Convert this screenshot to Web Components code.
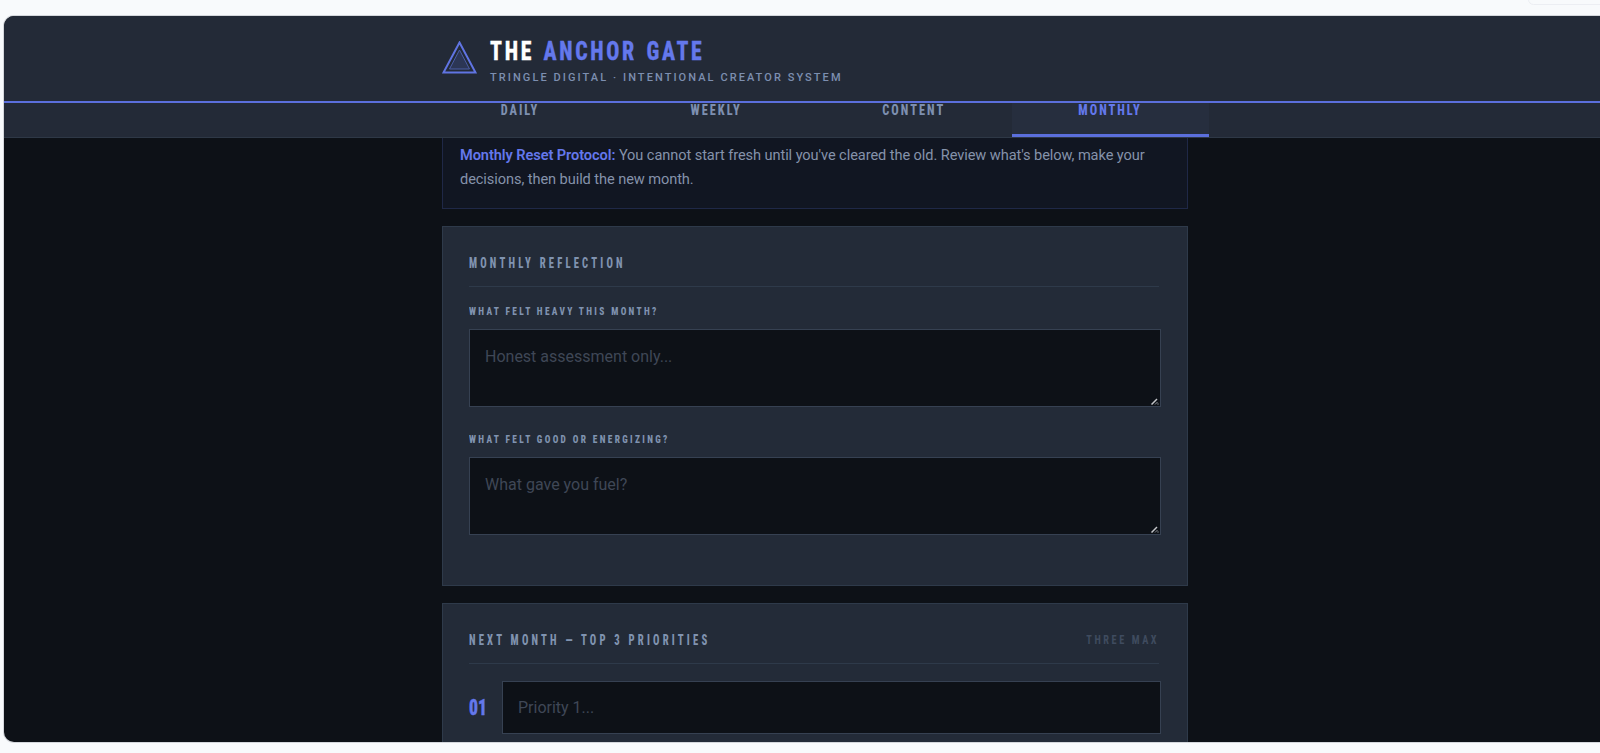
<!DOCTYPE html>
<html lang="en">
<head>
<meta charset="utf-8">
<title>The Anchor Gate</title>
<style>
html, body { margin: 0; height: 100%; overflow: hidden; background: #f8fafc; }
body { font-family: "Roboto", "Liberation Sans", sans-serif; }
</style>
</head>
<body>
<ag-app>
  <ag-header slot="header"></ag-header>
  <ag-nav slot="nav">
    <ag-tab>DAILY</ag-tab>
    <ag-tab>WEEKLY</ag-tab>
    <ag-tab>CONTENT</ag-tab>
    <ag-tab active>MONTHLY</ag-tab>
  </ag-nav>
  <ag-notice><b>Monthly Reset Protocol:</b> You cannot start fresh until you've cleared the old. Review what's below, make your decisions, then build the new month.</ag-notice>
  <ag-panel heading="MONTHLY REFLECTION">
    <ag-field label="WHAT FELT HEAVY THIS MONTH?" placeholder="Honest assessment only..."></ag-field>
    <ag-field label="WHAT FELT GOOD OR ENERGIZING?" placeholder="What gave you fuel?"></ag-field>
  </ag-panel>
  <ag-panel heading="NEXT MONTH — TOP 3 PRIORITIES" note="THREE MAX">
    <ag-priority num="01" placeholder="Priority 1..."></ag-priority>
  </ag-panel>
</ag-app>
<script>
// Roboto Condensed is wider than the reference's display face, so headings get squeezed with scaleX
const NARROW = `"Roboto Condensed", "Liberation Sans Narrow", "Liberation Sans", sans-serif`;
const TEXT = `"Roboto", "Liberation Sans", sans-serif`;

class AgApp extends HTMLElement {
  constructor() {
    super();
    this.attachShadow({mode: 'open'}).innerHTML = `
<style>
:host { display: block; height: 753px; box-sizing: border-box; padding: 16px 0 11px 4px; overflow: hidden; position: relative; }
.frame {
  width: 1622px; height: 726px; background: #0d1117; overflow: hidden;
  border-radius: 10px 0 0 10px; display: flex; flex-direction: column;
  box-shadow: 0 0 0 1px #d4d7dc;
}
main { flex: 1; display: flex; flex-direction: column; align-items: center; gap: 17px; overflow: hidden; }
.tab-edge {
  position: absolute; top: -6px; right: -10px; width: 80px; height: 9px;
  border: 1px solid #eceef3; border-radius: 8px; background: #f8fafc;
}
</style>
<div class="tab-edge"></div>
<div class="frame">
  <slot name="header"></slot>
  <slot name="nav"></slot>
  <main><slot></slot></main>
</div>`;
  }
}

class AgHeader extends HTMLElement {
  constructor() {
    super();
    this.attachShadow({mode: 'open'}).innerHTML = `
<style>
:host { display: block; background: #232a37; border-bottom: 2px solid #5b6fdc; height: 85px; box-sizing: content-box; }
.inner { width: 746px; margin: 0 auto; display: flex; gap: 13px; padding-top: 25px; }
svg { flex: none; }
h1 { margin: -2px 0 0; font: 800 26px/24px ${NARROW}; letter-spacing: 3.2px; word-spacing: 2px; color: #fff; white-space: nowrap;
  -webkit-text-stroke: .3px currentColor; transform: scaleX(.838); transform-origin: left; }
h1 span { color: #6478ec; }
p { margin: 8px 0 0; font: 500 11px/14px ${TEXT}; letter-spacing: 2.07px; color: #7d8fb0; white-space: nowrap; }
</style>
<div class="inner">
  <svg width="35" height="33" viewBox="0 0 35 33">
    <path d="M17.5 1.5 33.5 31.5H1.5Z" fill="none" stroke="#6074e2" stroke-width="2"/>
    <path d="M17.5 9 27.5 28H7.5Z" fill="#2c3655" stroke="#4c5ea8" stroke-width="1"/>
  </svg>
  <div>
    <h1>THE <span>ANCHOR GATE</span></h1>
    <p>TRINGLE DIGITAL · INTENTIONAL CREATOR SYSTEM</p>
  </div>
</div>`;
  }
}

class AgNav extends HTMLElement {
  constructor() {
    super();
    this.attachShadow({mode: 'open'}).innerHTML = `
<style>
:host { display: block; background: #232a37; border-bottom: 1px solid #2e3846; height: 34px; }
nav { width: 788px; margin: 0 auto; display: grid; grid-template-columns: repeat(4, 1fr); height: 34px; }
</style>
<nav><slot></slot></nav>`;
  }
}

class AgTab extends HTMLElement {
  constructor() {
    super();
    this.attachShadow({mode: 'open'}).innerHTML = `
<style>
:host { display: block; box-sizing: border-box; height: 34px; text-align: center; border-bottom: 3px solid transparent;
  font: 800 14px/15px ${NARROW}; letter-spacing: 2.3px; color: #7d8fb0; }
:host([active]) { background: #262e3e; border-bottom-color: #5b6fdc; color: #6478ec; }
span { display: inline-block; transform: scaleX(.88); }
</style>
<span><slot></slot></span>`;
  }
}

class AgNotice extends HTMLElement {
  constructor() {
    super();
    this.attachShadow({mode: 'open'}).innerHTML = `
<style>
:host { display: block; flex: none; box-sizing: border-box; width: 746px; height: 71px; padding: 5px 17px 0;
  background: #111622; border: 1px solid #1f2847; border-top: 0;
  font: 400 14.6px/24px ${TEXT}; letter-spacing: -.08px; color: #8592aa; }
::slotted(b) { color: #6478ec; font-weight: 600; }
</style>
<slot></slot>`;
  }
}

class AgPanel extends HTMLElement {
  constructor() {
    super();
    const note = this.getAttribute('note');
    this.attachShadow({mode: 'open'}).innerHTML = `
<style>
:host { display: block; flex: none; box-sizing: border-box; width: 746px; padding: 26px 26px 50px;
  background: #232b38; border: 1px solid #2e3a4a; }
header { display: flex; justify-content: space-between; align-items: center; height: 20px; padding-bottom: 13px; margin: 0 2px 18px 0;
  border-bottom: 1px solid #2e3a4a; }
h2 { margin: 0; font: 800 14px/20px ${NARROW}; letter-spacing: 4.2px; color: #8093b0; white-space: nowrap;
  transform: scaleX(.76); transform-origin: left; }
span { font: 700 12px/20px ${NARROW}; letter-spacing: 3px; color: #3f4b5f; white-space: nowrap;
  transform: scaleX(.855); transform-origin: right; }
.body { display: flex; flex-direction: column; gap: 26px; }
</style>
<header><h2>${this.getAttribute('heading')}</h2>${note ? `<span>${note}</span>` : ''}</header>
<div class="body"><slot></slot></div>`;
  }
}

class AgField extends HTMLElement {
  constructor() {
    super();
    this.attachShadow({mode: 'open'}).innerHTML = `
<style>
:host { display: block; position: relative; }
label { display: block; font: 800 11px/14px ${NARROW}; letter-spacing: 2.75px; color: #8093b0; margin-bottom: 10px; white-space: nowrap;
  transform: scaleX(.85); transform-origin: left; }
textarea { display: block; box-sizing: border-box; width: 100%; height: 78px; padding: 15px 15px 7px; margin: 0; resize: none;
  background: #0d1117; border: 1px solid #364152; border-radius: 0; outline: 0; color: #cbd5e1; font: 400 16px/24px ${TEXT}; }
textarea::placeholder { color: #3f4756; opacity: 1; }
/* the grip drawn over the corner: the native one comes out too dim here */
svg { position: absolute; right: 2px; bottom: 2px; pointer-events: none; }
</style>
<label>${this.getAttribute('label')}</label>
<textarea placeholder="${this.getAttribute('placeholder')}"></textarea>
<svg width="8" height="8" viewBox="0 0 8 8">
  <path d="M.5 7.5 6 2" stroke="#c4c6c9" stroke-width="1.5" fill="none"/>
  <path d="M4 7.5 6.5 5" stroke="#8a8d91" stroke-width="1" fill="none"/>
  <rect x="6.5" y="6.5" width="1" height="1" fill="#c4c6c9"/>
</svg>`;
  }
}

class AgPriority extends HTMLElement {
  constructor() {
    super();
    this.attachShadow({mode: 'open'}).innerHTML = `
<style>
:host { display: flex; align-items: center; gap: 16px; margin-top: -1px; }
b { flex: none; width: 17px; font: 800 22px/24px ${NARROW}; color: #6478ec; -webkit-text-stroke: .5px currentColor;
  transform: scaleX(.8); transform-origin: left; }
input { flex: 1; min-width: 0; box-sizing: border-box; height: 53px; padding: 0 15px; margin: 0;
  background: #0d1117; border: 1px solid #364152; border-radius: 0; outline: 0; color: #cbd5e1; font: 400 16px/24px ${TEXT}; }
input::placeholder { color: #3f4756; opacity: 1; }
</style>
<b>${this.getAttribute('num')}</b>
<input placeholder="${this.getAttribute('placeholder')}">`;
  }
}

customElements.define('ag-app', AgApp);
customElements.define('ag-header', AgHeader);
customElements.define('ag-nav', AgNav);
customElements.define('ag-tab', AgTab);
customElements.define('ag-notice', AgNotice);
customElements.define('ag-panel', AgPanel);
customElements.define('ag-field', AgField);
customElements.define('ag-priority', AgPriority);
</script>
</body>
</html>
